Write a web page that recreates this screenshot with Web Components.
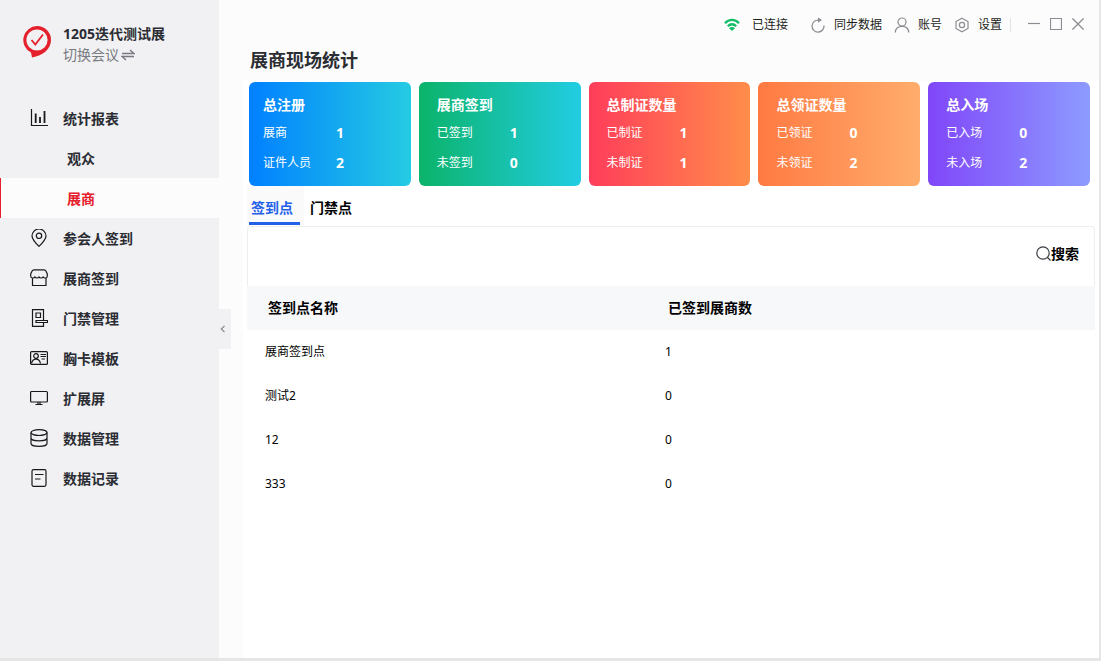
<!DOCTYPE html>
<html lang="zh-CN">
<head>
<meta charset="utf-8">
<meta name="viewport" content="width=device-width, initial-scale=1">
<title>展商现场统计</title>
<style>
  body {
    margin: 0;
    font-family: "Noto Sans", "Noto Sans CJK SC", sans-serif;
    font-size: 14px;
    line-height: 20px;
    color: #2b2d33;
    background: #fcfcfc;
  }
</style>
</head>
<body>
<app-shell>
  <app-sidebar slot="side">
    <event-brand slot="brand" event="1205迭代测试展">切换会议</event-brand>
    <nav-item icon="chart">统计报表</nav-item>
    <nav-item child>观众</nav-item>
    <nav-item child current>展商</nav-item>
    <nav-item icon="pin">参会人签到</nav-item>
    <nav-item icon="shop">展商签到</nav-item>
    <nav-item icon="gate">门禁管理</nav-item>
    <nav-item icon="badge">胸卡模板</nav-item>
    <nav-item icon="screen">扩展屏</nav-item>
    <nav-item icon="database">数据管理</nav-item>
    <nav-item icon="record">数据记录</nav-item>
  </app-sidebar>
  <top-bar slot="top"></top-bar>
  <h1 slot="title">展商现场统计</h1>
  <stat-row>
    <stat-card compact heading="总注册" from="#0080ff" to="#25cbe2" rows="展商:1,证件人员:2"></stat-card>
    <stat-card heading="展商签到" from="#0bb36a" to="#22cde3" rows="已签到:1,未签到:0"></stat-card>
    <stat-card heading="总制证数量" from="#ff3d5a" to="#ff8d4a" rows="已制证:1,未制证:1"></stat-card>
    <stat-card heading="总领证数量" from="#ff7a42" to="#ffad6c" rows="已领证:0,未领证:2"></stat-card>
    <stat-card heading="总入场" from="#8046f9" to="#8d9bff" rows="已入场:0,未入场:2"></stat-card>
  </stat-row>
  <point-tabs></point-tabs>
  <point-table></point-table>
</app-shell>

<script>
const ICONS = {
  logo: ['0 0 28 32', '<path fill="#e3202b" fill-rule="evenodd" d="M14 0a14 14 0 0 1 14 14c0 9-8 15.500-19 17.500l-1-5A14 14 0 0 1 14 0zM14 3.400a10.600 10.600 0 1 0 0 21.200 10.600 10.600 0 0 0 0-21.200z"/><path fill="none" stroke="#e3202b" stroke-width="1.800" d="M8.500 14l3.800 4.500L20 8.500"/>'],
  swap: ['0 0 14 12', '<path stroke-width="1.500" d="M1 4.500h12L9 1M13 7.500H1L5 11"/>'],
  chart: ['0 0 18 18', '<path d="M1.500 0v16.500H18"/><path stroke-width="1.800" d="M5.700 4.500V14M10 8v6M14.500 2v12"/>'],
  pin: ['0 0 18 18', '<path d="M9 17.400C5 13.500 2 10.500 2 7a7 7 0 0 1 14 0c0 3.500-3 6.500-7 10.400z"/><circle cx="9" cy="6.800" r="2.700"/>'],
  shop: ['0 0 18 18', '<path d="M4 .8h10c1 0 1.500.4 1.900 1.200L17.300 5v2.200A2 2 0 0 1 15.200 9c-1 0-1.700-.3-2.100-1-.4.700-1.100 1-2 1S9.400 8.700 9 8c-.4.700-1.100 1-2 1s-1.700-.3-2.100-1c-.4.700-1.100 1-2.100 1A2 2 0 0 1 .7 7.200V5L2.100 2C2.500 1.200 3 .8 4 .8zM2.500 9v7.500h13.500V9"/>'],
  gate: ['0 0 18 18', '<path d="M13.500 11V.6h-11v16.800h11V14M6 4h4.500v4.500H6zM6 11.500h11.500v2H6z"/>'],
  badge: ['0 0 18 18', '<rect x=".6" y="2.600" width="16.800" height="12.800" rx="1"/><circle cx="6" cy="7" r="2.300"/><path d="M1.500 14.500c.6-3 2.300-4.300 4.500-4.300s3.900 1.300 4.500 4.300M10.500 5.500H16M10.500 7.500H16M11.500 10H15"/>'],
  screen: ['0 0 18 18', '<rect x=".6" y="2.500" width="16.800" height="10.500" rx="1"/><path d="M8 13v2.500M10 13v2.500M5.500 15.500h7"/>'],
  database: ['0 0 18 18', '<ellipse cx="9" cy="3.600" rx="8" ry="2.900"/><path d="M1 3.600v10.800c0 1.600 3.600 2.900 8 2.900s8-1.300 8-2.900V3.600M1 9c0 1.600 3.600 2.900 8 2.900S17 10.600 17 9"/>'],
  record: ['0 0 18 18', '<rect x="2" y=".7" width="14" height="16.600" rx="1.500"/><path d="M5 5.500h8.500M5 10h5.500"/>'],
  wifi: ['0 0 16 14', '<path fill="none" stroke="#14bd68" stroke-width="2.300" d="M1 5.200C5 .8 11 .8 15 5.200M3.800 8.200c2.500-2.600 5.900-2.600 8.400 0"/><path fill="#14bd68" d="M5 10.300c1.800-1.700 4.200-1.700 6 0L8 13z"/>'],
  refresh: ['0 0 16 16', '<path stroke-width="1.300" d="M8.500 3.100A6 6 0 1 0 14 8.500"/><path fill="currentColor" stroke="none" d="M8 .4l4 2.700-4 2.700z"/>'],
  user: ['0 0 16 16', '<circle cx="8" cy="5" r="4"/><path d="M1.300 15.500C1.300 11.600 4 9.300 8 9.300s6.700 2.300 6.700 6.200"/>'],
  gear: ['0 0 16 16', '<path d="M8 1.200l6 3.300v7L8 14.800l-6-3.300v-7z"/><circle cx="8" cy="8" r="2.600"/>'],
  minimize: ['0 0 12 12', '<path d="M0 5.500h12"/>'],
  maximize: ['0 0 12 12', '<path d="M.5.5h11v11H.5z"/>'],
  close: ['0 0 12 12', '<path stroke-width="1.300" d="M.4.4l11.200 11.200M11.600.4L.4 11.600"/>'],
  search: ['0 0 15 15', '<circle cx="7" cy="7" r="6.200"/><path d="M11.500 11.500L14.500 14.500"/>'],
  left: ['0 0 6 8', '<path stroke-width="1.200" d="M4.500.8L1.300 4l3.200 3.200"/>']
};
const FILLED = ['logo', 'wifi'];

class BaseElement extends HTMLElement {
  constructor() {
    super();
    this.attachShadow({ mode: 'open' });
  }
  connectedCallback() {
    this.shadowRoot.innerHTML = this.render();
  }
}

customElements.define('ui-icon', class extends BaseElement {
  render() {
    const name = this.getAttribute('name');
    const [box, shapes] = ICONS[name];
    const [, , w, h] = box.split(' ');
    return `<style>
      :host { display: block; flex: none; }
      svg { display: block; }
    </style>
    <svg width="${w}" height="${h}" viewBox="${box}" fill="none" stroke="${FILLED.includes(name) ? 'none' : 'currentColor'}" stroke-width="1.200" aria-hidden="true">${shapes}</svg>`;
  }
});

customElements.define('app-shell', class extends BaseElement {
  render() {
    return `<style>
      :host {
        display: flex; box-sizing: border-box; min-height: 100vh;
        border: solid #e6e6e6; border-width: 0 2px 3px 0;
      }
      .main { flex: 1; min-width: 0; display: flex; flex-direction: column; }
      ::slotted(h1) {
        margin: 0 0 11px; padding-left: 31px;
        font-size: 18px; line-height: 20px; font-weight: 700;
      }
      .content { flex: 1; margin-left: 24px; padding: 1px 4px 0; background: #fff; }
    </style>
    <slot name="side"></slot>
    <div class="main">
      <slot name="top"></slot>
      <slot name="title"></slot>
      <main class="content"><slot></slot></main>
    </div>`;
  }
});

customElements.define('app-sidebar', class extends BaseElement {
  render() {
    return `<style>
      :host { display: block; flex: none; width: 219px; position: relative; background: #f1f1f3; }
      nav { margin-top: 33px; }
      button {
        position: absolute; left: 100%; top: 50%; transform: translateY(-50%);
        width: 12px; height: 40px; padding: 0 0 0 1px; border: 0;
        display: flex; align-items: center;
        background: #f1f1f3; color: #85878c;
      }
    </style>
    <slot name="brand"></slot>
    <nav><slot></slot></nav>
    <button type="button" aria-label="收起"><ui-icon name="left"></ui-icon></button>`;
  }
});

customElements.define('event-brand', class extends BaseElement {
  render() {
    return `<style>
      :host { display: flex; gap: 12px; padding: 23px 0 0 23px; }
      ui-icon[name=logo] { margin-top: 3px; }
      strong { display: block; line-height: 21px; }
      a { display: flex; align-items: center; gap: 2px; line-height: 21px; color: #777a80; text-decoration: none; }
    </style>
    <ui-icon name="logo"></ui-icon>
    <div>
      <strong>${this.getAttribute('event')}</strong>
      <a href="#switch"><slot></slot><ui-icon name="swap"></ui-icon></a>
    </div>`;
  }
});

customElements.define('nav-item', class extends BaseElement {
  render() {
    const icon = this.getAttribute('icon');
    return `<style>
      :host { display: block; }
      a {
        display: flex; align-items: center; gap: 15px; height: 40px; padding-left: 30px;
        font-weight: 700; color: inherit; text-decoration: none;
      }
      ui-icon { color: #17181b; }
      span { padding-top: 2px; }
      :host([child]) a { padding-left: 67px; }
      :host([current]) a { padding-left: 66px; border-left: 1px solid #e3202b; background: #fcfcfc; color: #e3202b; }
    </style>
    <a href="#nav"${this.hasAttribute('current') ? ' aria-current="page"' : ''}>${icon ? `<ui-icon name="${icon}"></ui-icon>` : ''}<span><slot></slot></span></a>`;
  }
});

customElements.define('top-bar', class extends BaseElement {
  render() {
    return `<style>
      :host {
        display: flex; justify-content: flex-end; align-items: center; gap: 12px;
        height: 50px; padding-right: 15px; font-size: 12px; color: #1d1e20;
      }
      .status { display: flex; align-items: center; gap: 12px; margin-right: 10px; }
      button {
        display: flex; align-items: center; gap: 8px; padding: 0; border: 0;
        background: none; font: inherit; color: inherit;
      }
      ui-icon { color: #8b8d92; }
      .tools { display: flex; align-items: center; gap: 8px; }
      .window { display: flex; gap: 10px; padding: 0 0 2px 9px; }
      hr { width: 1px; height: 14px; margin: 0; border: 0; background: #e2e2e4; }
    </style>
    <span class="status"><ui-icon name="wifi"></ui-icon>已连接</span>
    <button type="button"><ui-icon name="refresh"></ui-icon>同步数据</button>
    <button type="button"><ui-icon name="user"></ui-icon>账号</button>
    <div class="tools">
      <button type="button"><ui-icon name="gear"></ui-icon>设置</button>
      <hr>
      <div class="window">
        <button type="button" aria-label="最小化"><ui-icon name="minimize"></ui-icon></button>
        <button type="button" aria-label="最大化"><ui-icon name="maximize"></ui-icon></button>
        <button type="button" aria-label="关闭"><ui-icon name="close"></ui-icon></button>
      </div>
    </div>`;
  }
});

customElements.define('stat-row', class extends BaseElement {
  render() {
    return `<style>
      :host { display: grid; grid-template-columns: repeat(5, minmax(0, 1fr)); gap: 8px; margin: 0 5px 0 2px; }
    </style><slot></slot>`;
  }
});

customElements.define('stat-card', class extends BaseElement {
  render() {
    const rows = this.getAttribute('rows').split(',').map(r => r.split(':'));
    return `<style>
      :host {
        display: block; padding: 13px 8px 8px 18px; border-radius: 6px; color: #fff;
        background: linear-gradient(90deg, ${this.getAttribute('from')}, ${this.getAttribute('to')});
      }
      :host([compact]) { padding-left: 14px; }
      h2 { margin: 0 0 3px; font-size: 14px; line-height: 20px; font-weight: 700; }
      dl { display: grid; grid-template-columns: 73px 1fr; grid-auto-rows: 30px; align-items: center; margin: 0; font-size: 12px; }
      dd { margin: 0; font-size: 14px; font-weight: 700; }
    </style>
    <h2>${this.getAttribute('heading')}</h2>
    <dl>${rows.map(([k, v]) => `<dt>${k}</dt><dd>${v}</dd>`).join('')}</dl>`;
  }
});

customElements.define('point-tabs', class extends BaseElement {
  render() {
    return `<style>
      :host { display: block; height: 40px; }
      div { display: flex; gap: 2px; }
      button {
        display: flex; align-items: stretch; height: 39px; padding: 0 4px 0 2px; border: 0;
        background: none; font: inherit; font-weight: 700; color: #000;
      }
      span { display: flex; align-items: center; padding: 8px 7px 0 2px; border-bottom: 3px solid transparent; }
      [aria-selected=true] { background: #fafafa; color: #2360e8; }
      [aria-selected=true] span { border-color: #2360e8; }
    </style>
    <div role="tablist">
      <button type="button" role="tab" aria-selected="true"><span>签到点</span></button>
      <button type="button" role="tab" aria-selected="false"><span>门禁点</span></button>
    </div>`;
  }
});

customElements.define('point-table', class extends BaseElement {
  render() {
    const rows = [['展商签到点', 1], ['测试2', 0], ['12', 0], ['333', 0]];
    return `<style>
      :host { display: block; color: #000; }
      .tools {
        display: flex; justify-content: flex-end; align-items: center;
        box-sizing: border-box; height: 60px; padding: 0 15px 6px;
        border: 1px solid #eeeef0; border-bottom: 0; border-radius: 4px 4px 0 0;
      }
      button { display: flex; align-items: center; padding: 0; border: 0; background: none; font: inherit; font-weight: 700; color: inherit; }
      ui-icon { color: #3a3c42; }
      table { width: 100%; table-layout: fixed; border-collapse: collapse; }
      col:first-child { width: 400px; }
      th, td { height: 44px; padding: 0 0 0 18px; text-align: left; }
      th { padding-left: 21px; background: #f7f8fa; font-weight: 700; }
      td { font-size: 12px; }
    </style>
    <div class="tools"><button type="button"><ui-icon name="search"></ui-icon>搜索</button></div>
    <table>
      <colgroup><col><col></colgroup>
      <thead><tr><th scope="col">签到点名称</th><th scope="col">已签到展商数</th></tr></thead>
      <tbody>${rows.map(([n, c]) => `<tr><td>${n}</td><td>${c}</td></tr>`).join('')}</tbody>
    </table>`;
  }
});
</script>
</body>
</html>
